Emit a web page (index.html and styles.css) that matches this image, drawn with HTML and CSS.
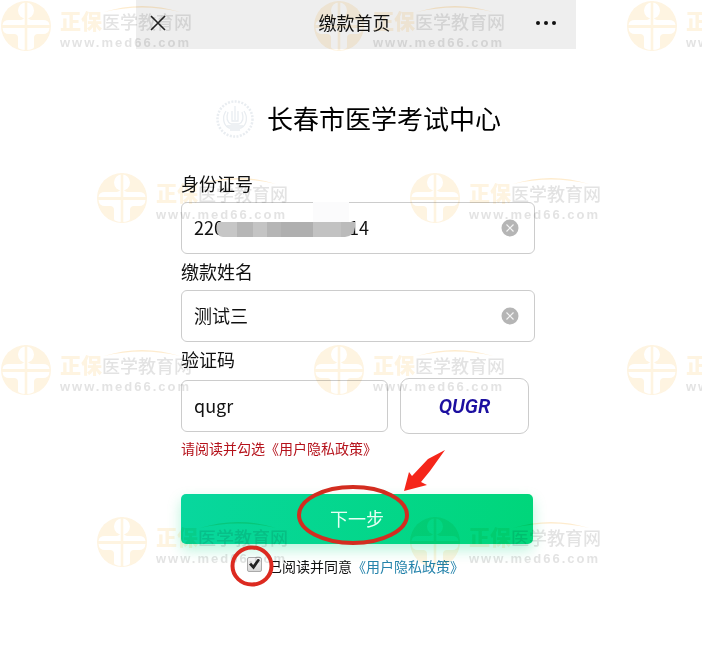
FILE: index.html
```html
<!DOCTYPE html>
<html lang="zh-CN">
<head>
<meta charset="utf-8">
<meta name="viewport" content="width=device-width, initial-scale=1">
<title>缴款首页</title>
<link rel="stylesheet" href="styles.css">
</head>
<body>
<main class="app">
  <header class="topbar">
    <button class="topbar-btn" type="button" aria-label="关闭"><svg width="16" height="16" viewBox="0 0 16 16"><path d="M1 1L15 15M15 1L1 15" stroke="#222" stroke-width="1.6" fill="none"/></svg></button>
    <h1 class="topbar-title">缴款首页</h1>
    <button class="topbar-btn" type="button" aria-label="更多"><svg width="22" height="6" viewBox="0 0 22 6" fill="#111"><circle cx="3" cy="3" r="2"/><circle cx="11" cy="3" r="2"/><circle cx="19" cy="3" r="2"/></svg></button>
  </header>

  <form class="form">
    <div class="brand">
      <svg class="brand-logo" width="40" height="40" viewBox="0 0 40 40" fill="none" stroke="#e9edf1">
        <circle cx="20" cy="20" r="17.5" stroke-width="2.5" stroke-dasharray="2 1.4"/>
        <path d="M11 12C7 18 8 26 14 29H26C32 26 33 18 29 12M13 13C11 19 12 23 16 25H24C28 23 29 19 27 13" stroke-width="1.3"/>
        <path d="M20 7V21M17 12V22H23V12M12 27H28M15 31H25" stroke-width="1.3"/>
      </svg>
      <h2 class="brand-name">长春市医学考试中心</h2>
    </div>

    <label class="label" for="idno">身份证号</label>
    <div class="field">
      <input class="input" id="idno" type="text" value="220                               14">
      <span class="smudge"></span>
      <span class="mosaic"></span>
      <button class="clear" type="button" aria-label="清除"><svg width="18" height="18" viewBox="0 0 18 18"><circle cx="9" cy="9" r="8.5" fill="#b5b5b5"/><path d="M5.5 5.5L12.5 12.5M12.5 5.5L5.5 12.5" stroke="#f4f4f4" stroke-width="1.2"/></svg></button>
    </div>

    <label class="label" for="payer">缴款姓名</label>
    <div class="field">
      <input class="input" id="payer" type="text" value="测试三">
      <button class="clear" type="button" aria-label="清除"><svg width="18" height="18" viewBox="0 0 18 18"><circle cx="9" cy="9" r="8.5" fill="#b5b5b5"/><path d="M5.5 5.5L12.5 12.5M12.5 5.5L5.5 12.5" stroke="#f4f4f4" stroke-width="1.2"/></svg></button>
    </div>

    <label class="label" for="code">验证码</label>
    <div class="code-row">
      <input class="input" id="code" type="text" value="qugr">
      <button class="captcha" type="button">QUGR</button>
    </div>
    <p class="error">请阅读并勾选《用户隐私政策》</p>

    <div class="submit-wrap">
      <button class="submit" type="button">下一步</button>
      <svg class="ring-submit" width="114" height="62" viewBox="0 0 114 62"><ellipse cx="57" cy="31" rx="54" ry="28" fill="none" stroke="#d32d20" stroke-width="4"/></svg>
      <svg class="arrow" width="44" height="44" viewBox="0 0 44 44"><path d="M42 1L25 10L9 27L6 23L1 42L24 36L18 33L27 22Z" fill="#f5261a"/></svg>
    </div>

    <div class="agree">
      <span class="check-wrap">
        <input class="check" id="agree" type="checkbox" checked>
        <svg class="ring-check" width="44" height="42" viewBox="0 0 44 42"><ellipse cx="22" cy="21" rx="19.5" ry="18.5" fill="none" stroke="#dc2a20" stroke-width="4"/></svg>
      </span>
      <label for="agree">已阅读并同意</label><a class="link" href="#policy">《用户隐私政策》</a>
    </div>
  </form>
</main>

<svg class="defs" width="0" height="0" aria-hidden="true">
  <symbol id="seal" viewBox="0 0 50 50">
    <circle cx="25" cy="25" r="25" fill="#fbd591"/>
    <g fill="#fff">
      <circle cx="25" cy="9.500" r="8"/>
      <path d="M1.500 24Q2 19 8 19H18Q22 19 23 17H27Q28 19 32 19H42Q48 19 48.500 24Z"/>
      <path d="M1.500 27H48.500Q48 33 42 33H37Q33 33 33 37V46Q33 48.500 25 49Q17 48.500 17 46V37Q17 33 13 33H8Q2 33 1.500 27Z"/>
    </g>
    <path d="M25 0V50" stroke="#fbd591" stroke-width="2.6"/>
  </symbol>
  <symbol id="arc" viewBox="0 0 76 8">
    <path d="M0 7Q38 -5 76 7Q38 -2 0 7Z" fill="#fbb94d"/>
  </symbol>
</svg>
<div class="marks" aria-hidden="true">
  <div class="marks-row">
    <div class="mark"><svg class="mark-seal"><use href="#seal"/></svg><div><div class="mark-name"><b>正保</b>医学教育网<svg class="mark-arc"><use href="#arc"/></svg></div><div class="mark-url">www.med66.com</div></div></div>
    <div class="mark"><svg class="mark-seal"><use href="#seal"/></svg><div><div class="mark-name"><b>正保</b>医学教育网<svg class="mark-arc"><use href="#arc"/></svg></div><div class="mark-url">www.med66.com</div></div></div>
    <div class="mark"><svg class="mark-seal"><use href="#seal"/></svg><div><div class="mark-name"><b>正保</b>医学教育网</div><div class="mark-url">www.med66.com</div></div></div>
  </div>
  <div class="marks-row shifted">
    <div class="mark"><svg class="mark-seal"><use href="#seal"/></svg><div><div class="mark-name"><b>正保</b>医学教育网<svg class="mark-arc"><use href="#arc"/></svg></div><div class="mark-url">www.med66.com</div></div></div>
    <div class="mark"><svg class="mark-seal"><use href="#seal"/></svg><div><div class="mark-name"><b>正保</b>医学教育网<svg class="mark-arc"><use href="#arc"/></svg></div><div class="mark-url">www.med66.com</div></div></div>
  </div>
  <div class="marks-row">
    <div class="mark"><svg class="mark-seal"><use href="#seal"/></svg><div><div class="mark-name"><b>正保</b>医学教育网<svg class="mark-arc"><use href="#arc"/></svg></div><div class="mark-url">www.med66.com</div></div></div>
    <div class="mark"><svg class="mark-seal"><use href="#seal"/></svg><div><div class="mark-name"><b>正保</b>医学教育网<svg class="mark-arc"><use href="#arc"/></svg></div><div class="mark-url">www.med66.com</div></div></div>
    <div class="mark"><svg class="mark-seal"><use href="#seal"/></svg><div><div class="mark-name"><b>正保</b>医学教育网</div><div class="mark-url">www.med66.com</div></div></div>
  </div>
  <div class="marks-row shifted">
    <div class="mark"><svg class="mark-seal"><use href="#seal"/></svg><div><div class="mark-name"><b>正保</b>医学教育网<svg class="mark-arc"><use href="#arc"/></svg></div><div class="mark-url">www.med66.com</div></div></div>
    <div class="mark"><svg class="mark-seal"><use href="#seal"/></svg><div><div class="mark-name"><b>正保</b>医学教育网<svg class="mark-arc"><use href="#arc"/></svg></div><div class="mark-url">www.med66.com</div></div></div>
  </div>
</div>
</body>
</html>
```
FILE: styles.css
```css
* { box-sizing: border-box; }

body {
  margin: 0;
  padding-left: 10px;
  position: relative;
  min-height: 100vh;
  background: #fff;
  color: #111;
  font-family: "Noto Sans CJK SC", sans-serif;
  font-size: 18px;
}

button, input { font: inherit; color: inherit; }
button { cursor: pointer; padding: 0; border: 0; background: none; }

.app { max-width: 440px; margin: 0 auto; }

.topbar {
  display: flex;
  align-items: center;
  justify-content: space-between;
  height: 49px;
  padding: 0 19px 4px 14px;
  background: #eee;
}
.topbar-title {
  margin: 0;
  padding: 0 0 2px 8px;
  font-size: 18px;
  font-weight: 400;
  line-height: 28px;
}
.topbar-btn { display: flex; }

.form { padding: 50px 41px 0 45px; }

.brand {
  display: flex;
  align-items: center;
  justify-content: center;
  gap: 12px;
  height: 40px;
  margin-bottom: 27px;
}
.brand-name {
  margin: 0;
  padding-bottom: 2px;
  font-size: 26px;
  font-weight: 400;
  line-height: 38px;
  color: #000;
}

.label { display: block; padding-bottom: 2px; line-height: 34px; }

.field { position: relative; display: flex; align-items: center; }
.input {
  width: 100%;
  min-width: 0;
  height: 52px;
  padding: 0 12px 2px;
  border: 1px solid #ccc;
  border-radius: 6px;
  background: #fff;
  outline: 0;
}
.clear { position: absolute; right: 16px; display: flex; }

/* Redaction over the middle digits */
.mosaic {
  position: absolute;
  left: 36px;
  top: 20px;
  width: 138px;
  height: 15px;
  border-radius: 4px 0 10px 6px;
  background: linear-gradient(90deg, #c6c6c6 0 20px, #b6b6b6 20px 36px, #c4c4c4 36px 50px, #b5b5b5 50px 64px, #afafaf 64px 96px, #c2c2c2 96px 124px, #bbb 124px);
}
.smudge {
  position: absolute;
  left: 132px;
  top: 0;
  width: 36px;
  height: 20px;
  background: #fbfbfc;
}

.code-row { display: flex; align-items: center; gap: 12px; padding-right: 6px; }
.code-row .input { flex: 1; }
.captcha {
  width: 129px;
  height: 56px;
  border: 1px solid #ccc;
  border-radius: 9px;
  background: #fff;
  color: #1c0fa0;
  font-family: Roboto, sans-serif;
  font-size: 20px;
  font-style: italic;
  font-weight: 600;
}

.error { margin: 0; font-size: 14px; line-height: 28px; color: #b5121b; }

.submit-wrap { position: relative; margin: 32px 2px 0 0; }
.submit {
  display: block;
  width: 100%;
  height: 50px;
  padding-bottom: 2px;
  border-radius: 5px;
  background: linear-gradient(100deg, #08d79e, #00d67a);
  box-shadow: 0 6px 14px rgba(0, 214, 130, .28);
  color: #e6fff4;
}
.ring-submit { position: absolute; left: 115px; top: -10px; }
.arrow { position: absolute; left: 222px; top: -45px; }

.agree {
  display: flex;
  align-items: center;
  padding-left: 66px;
  font-size: 14px;
  line-height: 44px;
}
.check-wrap { position: relative; display: flex; margin: 0 6px 4px 0; }
.check {
  appearance: none;
  display: flex;
  width: 15px;
  height: 15px;
  margin: 0;
  border: 1px solid #aaa;
  border-radius: 2px;
  background: linear-gradient(#f4f4f4, #d8d8d8);
}
.check:checked::before {
  content: "";
  flex: 1;
  margin: 1px;
  background: #222;
  clip-path: polygon(0 55%, 20% 38%, 38% 58%, 82% 0, 100% 14%, 42% 100%);
}
.ring-check { position: absolute; left: -17px; top: -12px; z-index: 1; }
.link { color: #2483ab; text-decoration: none; }

/* Watermark pattern over the whole page */
.defs { position: absolute; }
.marks {
  position: absolute;
  inset: 0;
  overflow: hidden;
  pointer-events: none;
  opacity: .28;
  mix-blend-mode: multiply;
}
.marks-row { display: flex; gap: 121px; height: 172px; padding: 1px; }
.marks-row.shifted { padding-left: 97px; }
.mark { display: flex; flex: none; gap: 9px; width: 192px; height: 50px; }
.mark-seal { flex: none; width: 50px; height: 50px; }
.mark-name {
  position: relative;
  padding: 5px 0 1px;
  font-size: 18px;
  font-weight: 500;
  line-height: 28px;
  white-space: nowrap;
  color: #999;
}
.mark-name b { font-size: 21px; font-weight: 900; color: #fbd591; }
.mark-arc { position: absolute; left: 44px; top: 4px; width: 76px; height: 8px; }
.mark-url {
  font-family: "Liberation Sans", sans-serif;
  font-size: 13px;
  font-weight: 700;
  line-height: 14px;
  letter-spacing: 2px;
  color: #999;
}
```
